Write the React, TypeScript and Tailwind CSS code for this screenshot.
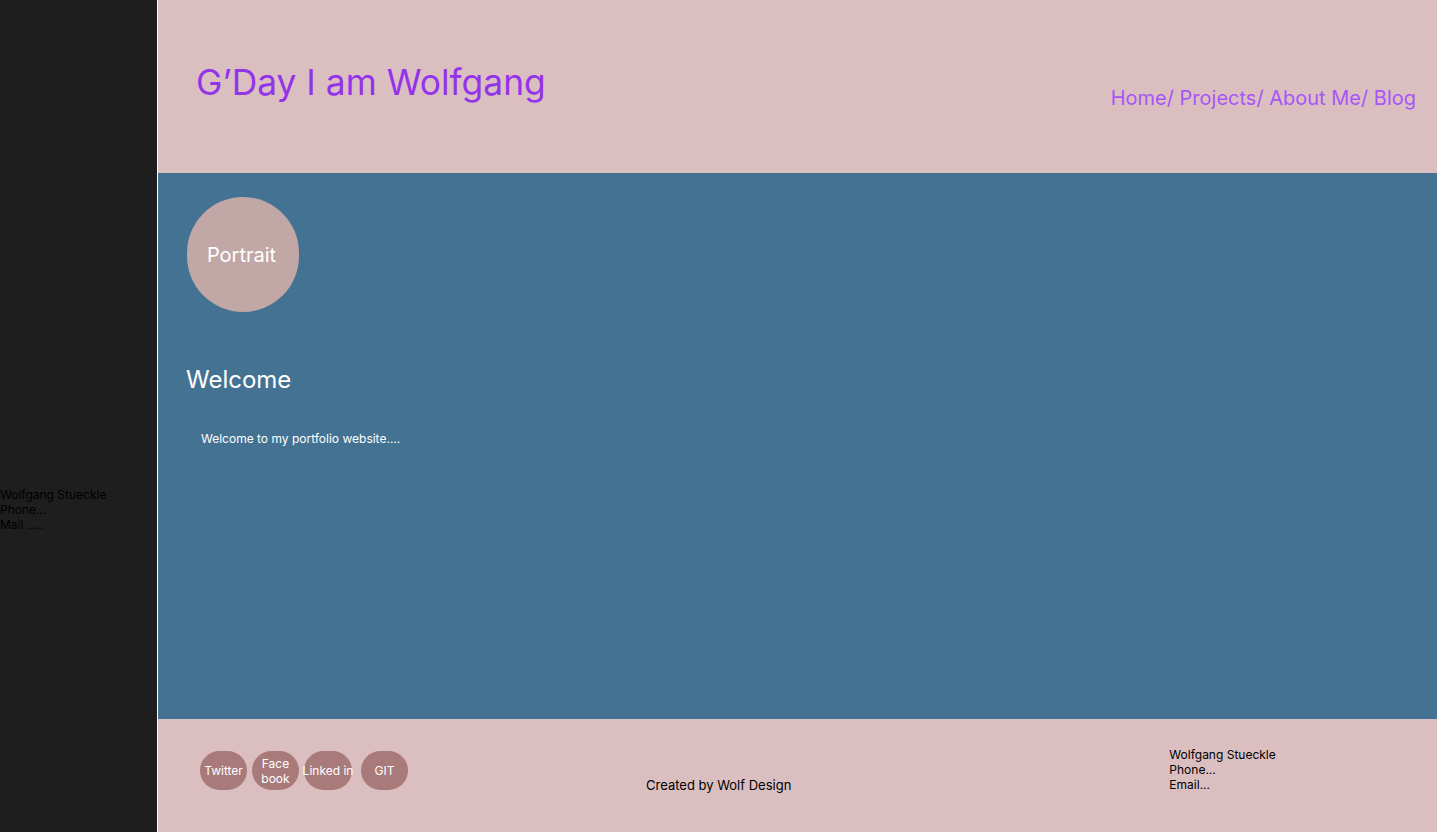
export default function App() {
  const socials = [
    { label: 'Twitter', cls: 'w-[47px]' },
    { label: 'Face book', cls: 'w-[47px] leading-[15px] px-2' },
    { label: 'Linked in', cls: 'w-[48px] whitespace-nowrap' },
    { label: 'GIT', cls: 'w-[47px] ml-[4px]' },
  ];

  return (
    <div className="flex h-[832px] w-[1437px] overflow-hidden font-['Inter',sans-serif]">
      {/* Sidebar */}
      <aside className="flex w-[158px] shrink-0 flex-col justify-center border-r border-white bg-[#1e1e1e] pt-[186px] text-[12px] leading-[15px] text-black">
        <p>Wolfgang Stueckle</p>
        <p>Phone...</p>
        <p>Mail .....</p>
      </aside>

      <div className="flex flex-1 flex-col">
        {/* Header */}
        <header className="flex h-[173px] shrink-0 items-start justify-between bg-[#dbbfc0] pr-[21px]">
          <h1 className="ml-[38px] mt-[61px] text-[35.4px] leading-[44px] text-[#9333ea]">G’Day I am Wolfgang</h1>
          <nav className="mt-[85px] text-[20px] leading-[26px] text-[#a855f7]">Home/ Projects/ About Me/ Blog</nav>
        </header>

        {/* Main */}
        <main className="flex-1 bg-[#447292] px-[28px] pt-[24px] text-white">
          <div className="ml-px flex h-[115px] w-[112px] items-center justify-center rounded-full bg-[#c2a7a7] pr-[3px] text-[20px]">
            Portrait
          </div>
          <h2 className="mt-[53px] text-[24px] leading-[30px]">Welcome</h2>
          <p className="ml-[15px] mt-[36px] text-[12px] leading-[15px]">Welcome to my portfolio website....</p>
        </main>

        {/* Footer */}
        <footer className="flex h-[113px] shrink-0 bg-[#dbbfc0] text-[12px] leading-[15px]">
          <div className="ml-[42px] mt-[32px] flex h-[39px] gap-[5px]">
            {socials.map((s) => (
              <div
                key={s.label}
                className={`flex h-[39px] items-center justify-center rounded-full bg-[#a97a7a] text-center text-white ${s.cls}`}
              >
                {s.label}
              </div>
            ))}
          </div>
          <p className="ml-[238px] mt-[58px] text-[13px] leading-[16px] text-black">Created by Wolf Design</p>
          <div className="ml-[378px] mt-[28px] text-black">
            <p>Wolfgang Stueckle</p>
            <p>Phone...</p>
            <p>Email...</p>
          </div>
        </footer>
      </div>
    </div>
  );
}
